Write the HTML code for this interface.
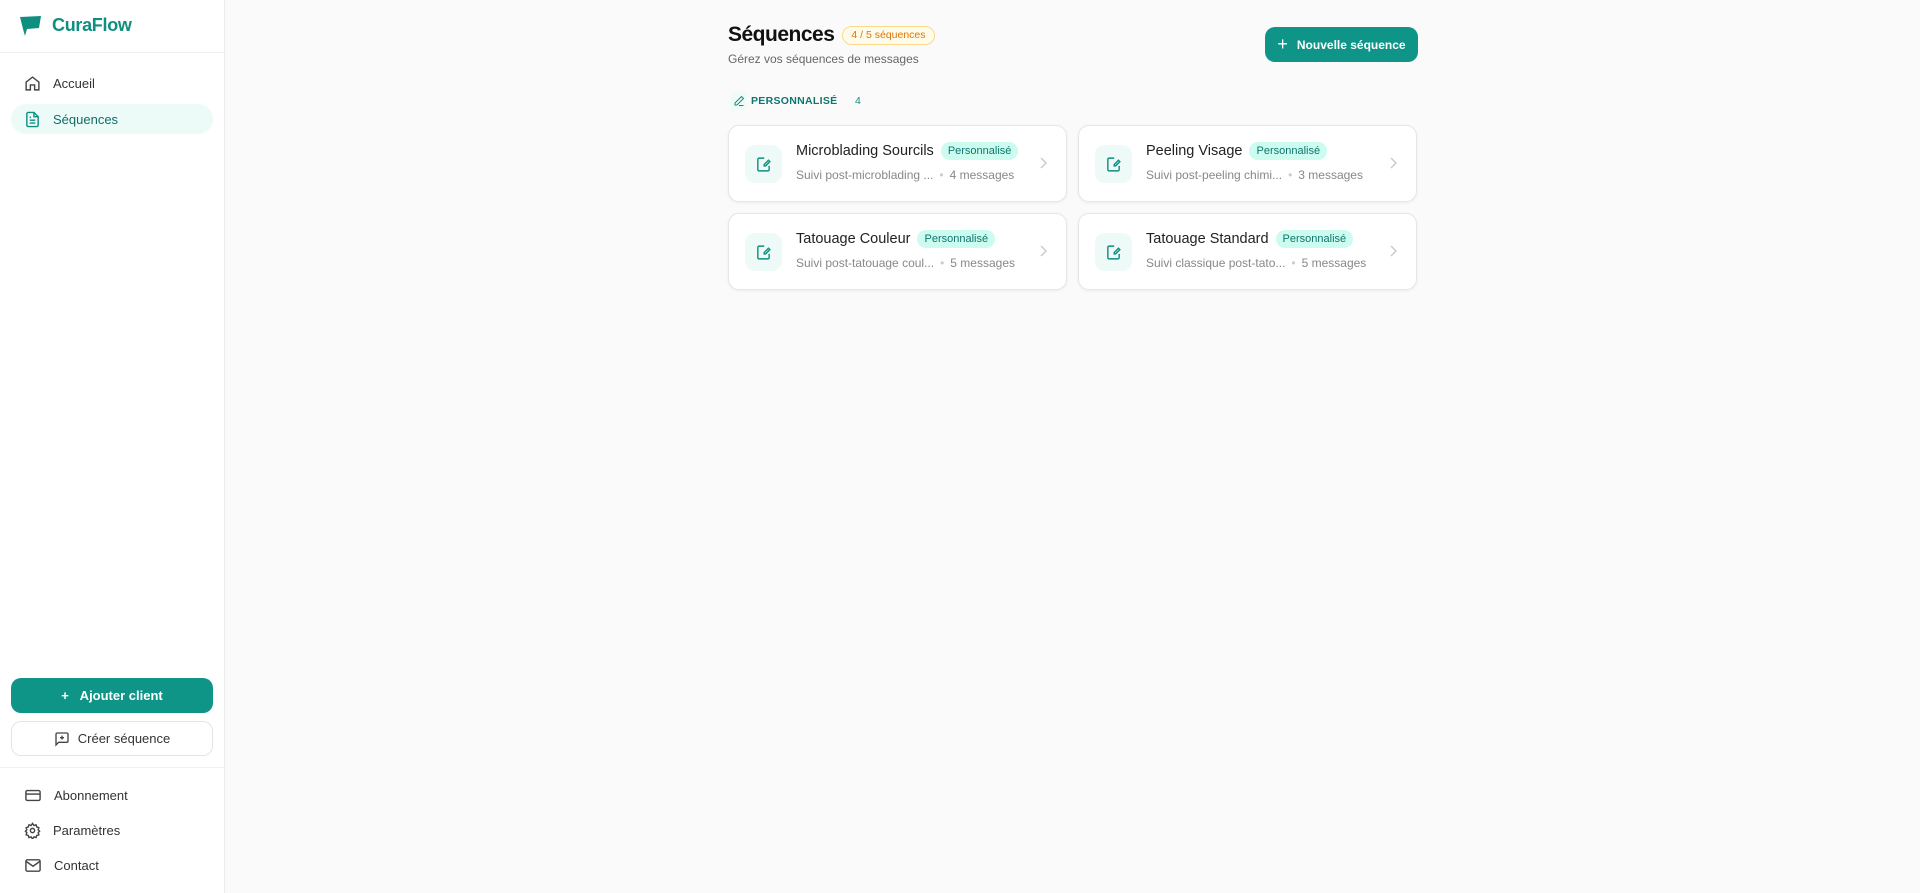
<!DOCTYPE html>
<html><head><meta charset="utf-8"><style>
*{box-sizing:border-box;margin:0;padding:0}
body{width:1920px;height:893px;background:#fafafa;font-family:"Liberation Sans",sans-serif;position:relative;overflow:hidden;color:#1a1a1a}
.side{position:absolute;left:0;top:0;width:225px;height:893px;background:#fff;border-right:1px solid #ececec}
.logo{position:absolute;left:20px;top:15px;display:flex;align-items:center}
.logo span{margin-left:11px;font-size:18px;font-weight:bold;color:#0f8f80;letter-spacing:-0.3px}
.hr{position:absolute;left:0;width:224px;height:1px;background:#efefef}
.nav{position:absolute;left:11px;width:202px;height:30px;display:flex;align-items:center;padding-left:13px;font-size:13px;color:#333;border-radius:15px}
.nav svg{margin-right:12px}
.nav.act{background:#ecfbf8;color:#0f6f66}
.btn{position:absolute;left:11px;width:202px;height:35px;border-radius:10px;display:flex;align-items:center;justify-content:center;font-size:13px}
.main{position:absolute;left:728px;top:0;width:690px}
.card{position:absolute;width:339px;height:77px;background:#fff;border:1px solid #e6e6e6;border-radius:11px;box-shadow:0 1px 3px rgba(0,0,0,.06)}
.ib{position:absolute;left:16px;top:19px;width:37px;height:38px;background:#eefaf7;border-radius:10px;display:flex;align-items:center;justify-content:center}
.t{position:absolute;left:67px;top:16px;font-size:14.5px;color:#222;display:flex;align-items:center;white-space:nowrap}
.bd{margin-left:7px;background:#ccfbef;color:#0f766e;font-size:11px;padding:3px 7px;border-radius:9px}
.s{position:absolute;left:67px;top:42px;font-size:12px;color:#888;white-space:nowrap}
.s i{font-style:normal;color:#ccc;margin:0 6px}
.ch{position:absolute;right:18px;top:30px}
</style></head><body>
<div class="side">
 <div class="logo"><svg width="21" height="20" viewBox="0 0 21 20"><path d="M0 1 L21 0 L19 12 L7 13 L5 20 L3 13 Z" fill="#0f8f80"/></svg><span>CuraFlow</span></div>
 <div class="hr" style="top:52px"></div>
 <div class="nav" style="top:68px"><svg width="17" height="17" viewBox="0 0 24 24" fill="none" stroke="#444" stroke-width="2"><path d="M3 10l9-7 9 7v11h-6v-7H9v7H3z"/></svg>Accueil</div>
 <div class="nav act" style="top:104px"><svg width="17" height="17" viewBox="0 0 24 24" fill="none" stroke="#0f8f80" stroke-width="2"><path d="M14 2H6a2 2 0 0 0-2 2v16a2 2 0 0 0 2 2h12a2 2 0 0 0 2-2V8z"/><path d="M14 2v6h6M8 13h8M8 17h8M8 9h2"/></svg>Séquences</div>
 <div class="btn" style="top:678px;background:#0f9488;color:#fff;font-weight:bold">+&nbsp;&nbsp;&nbsp;Ajouter client</div>
 <div class="btn" style="top:721px;border:1px solid #e4e4e4;color:#333;background:#fff"><svg width="16" height="16" viewBox="0 0 24 24" fill="none" stroke="#444" stroke-width="2" style="margin-right:8px"><path d="M21 15a2 2 0 0 1-2 2H7l-4 4V5a2 2 0 0 1 2-2h14a2 2 0 0 1 2 2z"/><path d="M12 7v6M9 10h6"/></svg>Créer séquence</div>
 <div class="hr" style="top:767px"></div>
 <div class="nav" style="top:780px"><svg width="18" height="17" viewBox="0 0 24 24" fill="none" stroke="#444" stroke-width="2"><rect x="2" y="5" width="20" height="14" rx="2"/><path d="M2 10h20"/></svg>Abonnement</div>
 <div class="nav" style="top:815px"><svg width="17" height="17" viewBox="0 0 24 24" fill="none" stroke="#444" stroke-width="2"><circle cx="12" cy="12" r="3"/><path d="M12 2l2 3 3-1 1 3 3 1-1 3 2 2-2 2 1 3-3 1-1 3-3-1-2 3-2-3-3 1-1-3-3-1 1-3-2-2 2-2-1-3 3-1 1-3 3 1z"/></svg>Paramètres</div>
 <div class="nav" style="top:850px"><svg width="18" height="17" viewBox="0 0 24 24" fill="none" stroke="#444" stroke-width="2"><rect x="2" y="4" width="20" height="16" rx="2"/><path d="M2 6l10 7 10-7"/></svg>Contact</div>
</div>
<div class="main">
 <div style="position:absolute;left:0;top:23px;display:flex;align-items:center">
  <span style="font-size:21px;font-weight:bold;color:#111;letter-spacing:-0.5px">Séquences</span>
  <span style="margin-left:8px;height:19px;padding:0 8px;border:1px solid #fcd98a;background:#fffbeb;color:#d97706;font-size:10.5px;line-height:17px;border-radius:10px">4 / 5 séquences</span>
 </div>
 <div style="position:absolute;left:0;top:52px;font-size:12px;color:#666">Gérez vos séquences de messages</div>
 <div style="position:absolute;left:537px;top:27px;width:153px;height:35px;background:#0f9488;border-radius:10px;color:#fff;font-size:12px;font-weight:bold;display:flex;align-items:center;justify-content:center"><span style="font-size:18px;font-weight:normal;margin-right:9px">+</span>Nouvelle séquence</div>
 <div style="position:absolute;left:2px;top:91px;width:17px;height:20px;background:#f0fbf8;border-radius:5px;display:flex;align-items:center;justify-content:center"><svg width="12" height="12" viewBox="0 0 24 24" fill="none" stroke="#0f8f80" stroke-width="2"><path d="M17 3l4 4L8 20H4v-4z"/><path d="M12 21h9"/></svg></div>
 <div style="position:absolute;left:23px;top:95px;font-size:10.5px;font-weight:bold;color:#0f766e;letter-spacing:.3px">PERSONNALISÉ</div>
 <div style="position:absolute;left:127px;top:95px;font-size:10.5px;color:#0f8f80">4</div>

 <div class="card" style="left:0;top:125px"><div class="ib"><svg width="17" height="17" viewBox="0 0 24 24" fill="none" stroke="#0f8f80" stroke-width="2"><path d="M13 3H6a2 2 0 0 0-2 2v14a2 2 0 0 0 2 2h12a2 2 0 0 0 2-2v-5"/><path d="M19 6l2 2-6 6h-2v-2z"/><path d="M8 17h.01"/></svg></div><div class="t">Microblading Sourcils<span class="bd">Personnalisé</span></div><div class="s">Suivi post-microblading ...<i>•</i>4 messages</div><svg class="ch" width="10" height="14" viewBox="0 0 10 14" fill="none" stroke="#ccc" stroke-width="1.5"><path d="M3 2l5 5-5 5"/></svg></div>
 <div class="card" style="left:350px;top:125px"><div class="ib"><svg width="17" height="17" viewBox="0 0 24 24" fill="none" stroke="#0f8f80" stroke-width="2"><path d="M13 3H6a2 2 0 0 0-2 2v14a2 2 0 0 0 2 2h12a2 2 0 0 0 2-2v-5"/><path d="M19 6l2 2-6 6h-2v-2z"/><path d="M8 17h.01"/></svg></div><div class="t">Peeling Visage<span class="bd">Personnalisé</span></div><div class="s">Suivi post-peeling chimi...<i>•</i>3 messages</div><svg class="ch" width="10" height="14" viewBox="0 0 10 14" fill="none" stroke="#ccc" stroke-width="1.5"><path d="M3 2l5 5-5 5"/></svg></div>
 <div class="card" style="left:0;top:213px"><div class="ib"><svg width="17" height="17" viewBox="0 0 24 24" fill="none" stroke="#0f8f80" stroke-width="2"><path d="M13 3H6a2 2 0 0 0-2 2v14a2 2 0 0 0 2 2h12a2 2 0 0 0 2-2v-5"/><path d="M19 6l2 2-6 6h-2v-2z"/><path d="M8 17h.01"/></svg></div><div class="t">Tatouage Couleur<span class="bd">Personnalisé</span></div><div class="s">Suivi post-tatouage coul...<i>•</i>5 messages</div><svg class="ch" width="10" height="14" viewBox="0 0 10 14" fill="none" stroke="#ccc" stroke-width="1.5"><path d="M3 2l5 5-5 5"/></svg></div>
 <div class="card" style="left:350px;top:213px"><div class="ib"><svg width="17" height="17" viewBox="0 0 24 24" fill="none" stroke="#0f8f80" stroke-width="2"><path d="M13 3H6a2 2 0 0 0-2 2v14a2 2 0 0 0 2 2h12a2 2 0 0 0 2-2v-5"/><path d="M19 6l2 2-6 6h-2v-2z"/><path d="M8 17h.01"/></svg></div><div class="t">Tatouage Standard<span class="bd">Personnalisé</span></div><div class="s">Suivi classique post-tato...<i>•</i>5 messages</div><svg class="ch" width="10" height="14" viewBox="0 0 10 14" fill="none" stroke="#ccc" stroke-width="1.5"><path d="M3 2l5 5-5 5"/></svg></div>
</div>
</body></html>
